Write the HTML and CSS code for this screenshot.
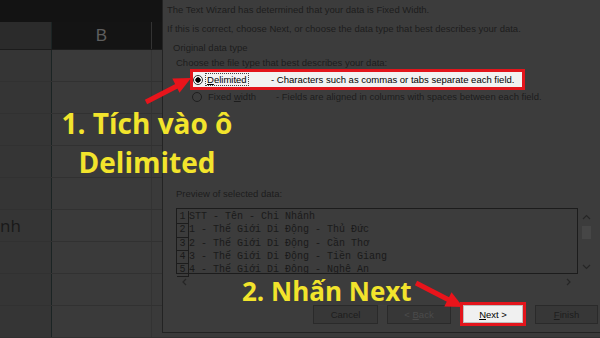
FILE: index.html
```html
<!DOCTYPE html>
<html lang="vi">
<head>
    <meta charset="UTF-8">
    <meta name="viewport" content="width=device-width, initial-scale=1.0">
    <title>Text Import Wizard - Delimited</title>
    <link rel="stylesheet" href="styles.css">
</head>
<body>
    <!-- bảng tính phía sau (đã làm tối) -->
    <div class="sheet">
        <div class="ribbon"></div>
        <div class="sheet-row head">
            <div class="cell col-a"></div>
            <div class="cell col-b">B</div>
            <div class="cell col-rest"></div>
        </div>
        <div class="sheet-row"><div class="cell col-a"></div><div class="cell col-b"></div><div class="cell col-rest"></div></div>
        <div class="sheet-row"><div class="cell col-a"></div><div class="cell col-b"></div><div class="cell col-rest"></div></div>
        <div class="sheet-row"><div class="cell col-a"></div><div class="cell col-b"></div><div class="cell col-rest"></div></div>
        <div class="sheet-row"><div class="cell col-a"></div><div class="cell col-b"></div><div class="cell col-rest"></div></div>
        <div class="sheet-row"><div class="cell col-a"></div><div class="cell col-b"></div><div class="cell col-rest"></div></div>
        <div class="sheet-row"><div class="cell col-a cell-text">nh</div><div class="cell col-b"></div><div class="cell col-rest"></div></div>
        <div class="sheet-row"><div class="cell col-a"></div><div class="cell col-b"></div><div class="cell col-rest"></div></div>
        <div class="sheet-row"><div class="cell col-a"></div><div class="cell col-b"></div><div class="cell col-rest"></div></div>
        <div class="sheet-row"><div class="cell col-a"></div><div class="cell col-b"></div><div class="cell col-rest"></div></div>
    </div>

    <!-- hộp thoại Text Import Wizard -->
    <div class="wizard">
        <p class="line">The Text Wizard has determined that your data is Fixed Width.</p>
        <p class="line">If this is correct, choose Next, or choose the data type that best describes your data.</p>
        <p class="group-title">Original data type</p>
        <p class="choose">Choose the file type that best describes your data:</p>

        <div class="option highlight">
            <span class="radio checked"></span>
            <span class="opt-name"><span class="focus"><u>D</u>elimited</span></span>
            <span class="opt-desc">- Characters such as commas or tabs separate each field.</span>
        </div>
        <div class="option">
            <span class="radio"></span>
            <span class="opt-name">Fixed <u>w</u>idth</span>
            <span class="opt-desc">- Fields are aligned in columns with spaces between each field.</span>
        </div>

        <p class="preview-title">Preview of selected data:</p>
        <div class="preview">
            <div class="preview-text">
                <div class="prow"><span class="num">1</span>STT - Tên - Chi Nhánh</div>
                <div class="prow"><span class="num">2</span>1 - Thế Giới Di Động - Thủ Đức</div>
                <div class="prow"><span class="num">3</span>2 - Thế Giới Di Động - Cần Thơ</div>
                <div class="prow"><span class="num">4</span>3 - Thế Giới Di Động - Tiền Giang</div>
                <div class="prow"><span class="num">5</span>4 - Thế Giới Di Động - Nghệ An</div>
            </div>
            <div class="vscroll">
                <svg width="9" height="6" viewBox="0 0 9 6"><polyline points="1,5 4.5,1.5 8,5" /></svg>
                <span class="thumb"></span>
                <svg width="9" height="6" viewBox="0 0 9 6"><polyline points="1,1 4.5,4.5 8,1" /></svg>
            </div>
            <div class="hscroll">
                <svg width="5" height="8" viewBox="0 0 5 8"><polyline points="4,1 1,4 4,7" /></svg>
                <svg width="5" height="8" viewBox="0 0 5 8"><polyline points="1,1 4,4 1,7" /></svg>
            </div>
        </div>

        <div class="buttons">
            <button class="btn">Cancel</button>
            <button class="btn disabled">&lt; <u>B</u>ack</button>
            <div class="mark"><button class="btn next"><u>N</u>ext &gt;</button></div>
            <button class="btn finish"><u>F</u>inish</button>
        </div>
    </div>

    <!-- chú thích -->
    <div class="note note-1">1. Tích vào ô<br>Delimited</div>
    <div class="note note-2">2. Nhấn Next</div>

    <svg class="arrows" width="600" height="338" viewBox="0 0 600 338">
        <line x1="146" y1="102" x2="177" y2="86" />
        <polygon points="191,78 179.5,92.8 172.3,78.6" />
        <line x1="416" y1="283" x2="449" y2="300" />
        <polygon points="463,307 444.3,306.4 451.5,292.2" />
    </svg>
</body>
</html>
```

FILE: styles.css
```css
body {
    margin: 0;
    width: 600px;
    height: 338px;
    overflow: hidden;
    position: relative;
    background: #363636;
    font-family: "Liberation Sans", Arial, sans-serif;
}

/* bảng tính */
.sheet {
    display: flex;
    flex-direction: column;
}
.ribbon {
    height: 22px;
    background: #131313;
}
.sheet-row {
    display: flex;
    height: 32px;
    box-sizing: border-box;
    border-bottom: 1px solid #313131;
}
.sheet-row.head {
    height: 28px;
    border-bottom: 1px solid #1c1c1c;
}
.cell {
    box-sizing: border-box;
}
.col-a {
    width: 52px;
    background: #353535;
    border-right: 1px solid #1b2424;
}
.col-b {
    width: 100px;
    background: #3a3a3a;
    border-right: 1px solid #333;
}
.col-rest {
    flex: 1;
    background: #3a3a3a;
}
.head .col-a {
    background: #2b2b2b;
}
.head .col-b,
.head .col-rest {
    background: #141414;
}
.head .col-b {
    display: flex;
    align-items: center;
    justify-content: center;
    color: #5e5e5e;
    font-size: 17px;
}
.cell-text {
    display: flex;
    align-items: center;
    font-family: "Open Sans", sans-serif;
    font-size: 17px;
    color: #191919;
}

/* hộp thoại */
.wizard {
    position: absolute;
    left: 162px;
    top: 0;
    width: 460px;
    height: 333px;
    box-sizing: border-box;
    border-left: 1px solid #232323;
    border-bottom: 1px solid #232323;
    background: #3c3c3c;
    color: #1d1d1d;
    font-size: 9.5px;
}
.wizard p {
    margin: 0;
}
.line {
    padding-left: 4px;
    line-height: 19px;
}
.group-title {
    padding-left: 10px;
    line-height: 19px;
}
.choose {
    padding-left: 13px;
    line-height: 12px;
}

.option {
    display: flex;
    align-items: center;
    height: 13px;
    margin-left: 29px;
}
.option .radio {
    margin-right: 6px;
}
.option .opt-name {
    width: 68px;
    flex: none;
}
.option.highlight {
    width: 335px;
    height: 21px;
    margin-left: 27px;
    box-sizing: border-box;
    border: 3px solid #e3151c;
    background: #f2f2f2;
    color: #000;
}
.highlight .radio {
    margin-right: 3px;
}
.highlight .opt-name {
    width: 65px;
}
.radio {
    width: 10px;
    height: 10px;
    flex: none;
    box-sizing: border-box;
    border-radius: 50%;
    border: 1px solid #1f1f1f;
}
.highlight .radio {
    border-color: #333;
    background: radial-gradient(circle, #000 0 2.4px, #fff 3px);
}
.focus {
    outline: 1px dotted #444;
    padding: 0 1px;
}

.wizard .preview-title {
    margin-top: 84px;
    padding-left: 13px;
    line-height: 13px;
}
.preview {
    display: grid;
    grid-template-columns: 402px 16px;
    grid-template-rows: 66px 16px;
    margin: 8px 0 0 13px;
}
.preview-text {
    box-sizing: border-box;
    border: 1px solid #1c1c1c;
    padding-top: 2px;
    font-family: "Liberation Mono", "DejaVu Sans Mono", monospace;
    font-size: 10px;
    line-height: 12.25px;
    color: #1a1a1a;
}
.prow {
    display: flex;
    white-space: pre;
}
.num {
    width: 12px;
    box-sizing: border-box;
    text-align: center;
    border-right: 1px solid #1c1c1c;
    border-bottom: 1px solid #1c1c1c;
}
.vscroll {
    display: flex;
    flex-direction: column;
    align-items: center;
    padding: 6px 0 4px;
}
.vscroll .thumb {
    width: 9px;
    height: 13px;
    margin: 6px 0 auto;
    background: #464646;
}
.hscroll {
    grid-column: 1 / 3;
    display: flex;
    align-items: center;
    justify-content: space-between;
    padding: 0 23px 0 6px;
}
.preview svg polyline {
    fill: none;
    stroke: #262626;
    stroke-width: 1.2;
}

.buttons {
    display: flex;
    align-items: center;
    gap: 9px;
    height: 24px;
    margin-top: 12px;
    padding-left: 150px;
}
.btn {
    width: 65px;
    height: 19px;
    padding: 0;
    box-sizing: border-box;
    background: #373737;
    border: 1px solid #2a2a2a;
    font: inherit;
    color: #1d1d1d;
}
.btn.disabled {
    width: 64px;
    color: #4b4b4b;
}
.btn.finish {
    width: 63px;
}
.mark {
    width: 66px;
    height: 24px;
    box-sizing: border-box;
    border: 3px solid #e3151c;
    background: #f0f0f0;
    display: flex;
}
.btn.next {
    width: 100%;
    height: 100%;
    background: #f0f0f0;
    border: 1px solid #bdbdbd;
    color: #000;
}

/* chú thích vàng + mũi tên đỏ */
.note {
    position: absolute;
    font-family: "Open Sans", sans-serif;
    font-weight: 700;
    color: #f2e42c;
    white-space: nowrap;
}
.note-1 {
    left: 47px;
    top: 104px;
    width: 200px;
    text-align: center;
    font-size: 28px;
    line-height: 39px;
}
.note-2 {
    left: 242px;
    top: 276px;
    font-size: 26px;
    line-height: 30px;
}
.arrows {
    position: absolute;
    left: 0;
    top: 0;
    pointer-events: none;
}
.arrows line {
    stroke: #e8141b;
    stroke-width: 5;
}
.arrows polygon {
    fill: #e8141b;
}
```
